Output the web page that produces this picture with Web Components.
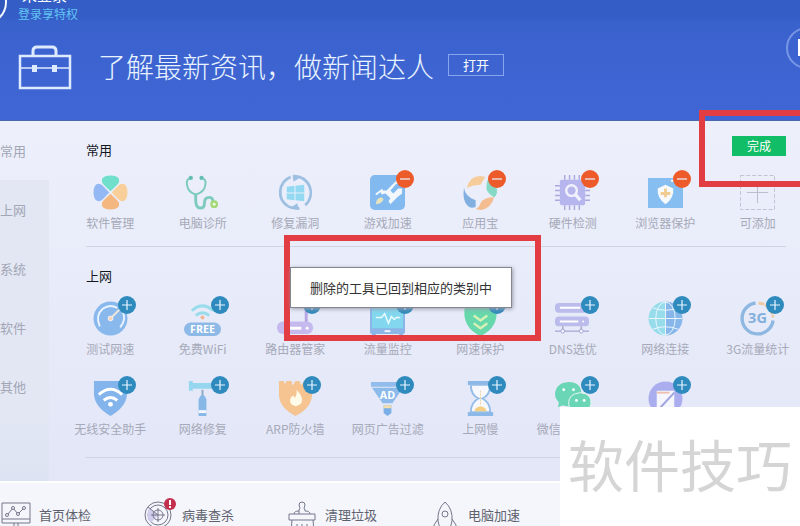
<!DOCTYPE html>
<html lang="zh-CN">
<head>
<meta charset="utf-8">
<meta name="viewport" content="width=device-width, initial-scale=1">
<title>工具箱</title>
<style>
  body {
    margin: 0;
    font-family: "Noto Sans CJK SC", sans-serif;
    font-size: 12px;
    overflow: hidden;
  }
</style>
</head>
<body>
<toolbox-app>
  <news-banner slot="banner">了解最新资讯，做新闻达人</news-banner>
  <side-nav slot="nav"></side-nav>

  <tool-section heading="常用" editing>
    <tool-tile icon="clover">软件管理</tool-tile>
    <tool-tile icon="clinic">电脑诊所</tool-tile>
    <tool-tile icon="patch">修复漏洞</tool-tile>
    <tool-tile icon="game" action="remove">游戏加速</tool-tile>
    <tool-tile icon="store" action="remove">应用宝</tool-tile>
    <tool-tile icon="chip" action="remove">硬件检测</tool-tile>
    <tool-tile icon="browser" action="remove">浏览器保护</tool-tile>
    <tool-tile icon="empty">可添加</tool-tile>
  </tool-section>

  <tool-section heading="上网" class="last">
    <tool-tile icon="gauge" action="add">测试网速</tool-tile>
    <tool-tile icon="wifi" action="add">免费WiFi</tool-tile>
    <tool-tile icon="router" action="add">路由器管家</tool-tile>
    <tool-tile icon="monitor" action="add">流量监控</tool-tile>
    <tool-tile icon="shield" action="add">网速保护</tool-tile>
    <tool-tile icon="dns" action="add">DNS选优</tool-tile>
    <tool-tile icon="globe" action="add">网络连接</tool-tile>
    <tool-tile icon="mobile" action="add">3G流量统计</tool-tile>
    <tool-tile icon="wifishield" action="add">无线安全助手</tool-tile>
    <tool-tile icon="hammer" action="add">网络修复</tool-tile>
    <tool-tile icon="fire" action="add">ARP防火墙</tool-tile>
    <tool-tile icon="funnel" action="add">网页广告过滤</tool-tile>
    <tool-tile icon="hourglass" action="add">上网慢</tool-tile>
    <tool-tile icon="wechat" action="add">微信聊天备份</tool-tile>
    <tool-tile icon="window" action="add"></tool-tile>
  </tool-section>

  <footer-item slot="footer" icon="check">首页体检</footer-item>
  <footer-item slot="footer" icon="virus">病毒查杀</footer-item>
  <footer-item slot="footer" icon="clean">清理垃圾</footer-item>
  <footer-item slot="footer" icon="rocket">电脑加速</footer-item>
</toolbox-app>

<mark-frame class="done"></mark-frame>
<mark-frame class="tip"></mark-frame>
<tip-box>删除的工具已回到相应的类别中</tip-box>
<corner-mark>软件技巧</corner-mark>

<script>
// Tool icons, drawn in a 36 x 36 box
const toolIcons = {
  clover: `
    <path d="M18 17 11 11Q5 1 18 .5 31 1 25 11Z" fill="#70dfcb"/>
    <path d="M17 18 11 11Q1 5 .5 18 1 31 11 25Z" fill="#94b8f4"/>
    <path d="M19 18 25 11Q35 5 35.500 18 35 31 25 25Z" fill="#f8cf98"/>
    <path d="M18 19 11 25Q5 35 18 35.500 31 35 25 25Z" fill="#f3b77f"/>
    <path d="m8 8 20 20M28 8 8 28" stroke="#ebeefa" stroke-width="1.500"/>`,
  clinic: `
    <g fill="none" stroke="#7ccbbd" stroke-width="2">
      <path d="M6 3Q1 4 2 10 3 18 11 20 20 18 21 10 22 4 17 3"/>
      <path d="M11 20v6q0 8 5 8 4 0 4-5 0-6 5-6 4 0 4 6" stroke-width="3"/>
    </g>
    <circle cx="6" cy="3" r="2.200" fill="#64bfb2"/><circle cx="17" cy="3" r="2.200" fill="#64bfb2"/>
    <circle cx="30" cy="30" r="4" fill="#a3d979"/><circle cx="30" cy="30" r="1.500" fill="#effbdc"/>`,
  patch: `
    <g fill="none" stroke="#9dbfe2" stroke-width="2.800">
      <path d="M13 2A17 17 0 0 0 10 32"/><path d="M16 1.200A17 17 0 0 1 28 31"/><path d="M10 32A17 17 0 0 0 22 34"/>
    </g>
    <path d="m15 0 7 3-6 4zM21 36l-7-3 6-4z" fill="#9dbfe2"/>
    <path d="m9 12 8-1v7H9zM18 11l9-1v8h-9zM9 19h8v7l-8-1zM18 19h9v8l-9-1z" fill="#94d9f2"/>`,
  game: `
    <rect width="36" height="36" rx="5" fill="#82b9ef"/>
    <path d="M10 16h7L28 5h6l-3 4h-4l-6 7 3 3 5-5h4v5l-5 4-7 7-2-3 2-3-5-5-4 1z" fill="#f2f7fd"/>
    <path d="M6 30q0-6 6-7l2 2q-2 5-8 5z" fill="#e6e3bd"/><path d="m6 20 7-5" stroke="#f2f7fd" stroke-width="2"/>`,
  store: `
    <path d="M4 13Q7 1 18 1l5 1-5 8Q12 10 4 13z" fill="#f6cd9a"/>
    <path d="M26 3q10 6 9 15-1 4-3 5-7-4-8-9 0-6 2-11z" fill="#86d9c5"/>
    <path d="M1 13q1 9 12 13v7q-5 2-8-1Q-1 26 1 13z" fill="#80afe0"/>
    <path d="M13 35q4-2 5-6 3-6 14-6-3 12-14 13z" fill="#f3bd90"/>`,
  chip: `
    <rect x="5" y="5" width="26" height="26" rx="2" fill="#b7b5ee"/>
    <path d="M10 0v5M15 0v5M20 0v5M25 0v5M10 31v5M15 31v5M20 31v5M25 31v5M0 11h5M0 16h5M0 21h5M0 26h5M31 11h5M31 16h5M31 21h5M31 26h5" stroke="#aaa8de" stroke-width="1.500"/>
    <circle cx="17" cy="16" r="5.500" fill="none" stroke="#f1f1fd" stroke-width="2.500"/>
    <path d="m21 20 5 6" stroke="#f1f1fd" stroke-width="3.500"/>`,
  browser: `
    <path d="M0 3h36v31H0z" fill="#87bef1"/><circle cx="25" cy="6" r="1.500" fill="#eef6ff"/><circle cx="31" cy="6" r="1.500" fill="#eef6ff"/>
    <path d="m18 10 8 4q1 10-8 16Q9 24 10 14z" fill="#f6fafd"/>
    <path d="M18 14v9M13 19h10" stroke="#f1cd94" stroke-width="3"/>`,
  empty: `
    <path d="M.5.5h35v35H.5z" fill="none" stroke="#bfc2d3" stroke-dasharray="4 2"/>
    <path d="M18 7v22M7 18h22" stroke="#b9bccd"/>`,
  gauge: `
    <circle cx="18" cy="18" r="17.500" fill="#89b8ec"/>
    <path d="M7 26Q2 15 10 8q7-5 15-1" fill="none" stroke="#eaf4fe" stroke-width="2"/>
    <path d="M31 12q3 8-3 15" fill="none" stroke="#eaf4fe" stroke-width="2"/>
    <path d="m18 18 9-9" stroke="#eee6da" stroke-width="2"/><circle cx="18" cy="18" r="2.500" fill="#f5d7b9" stroke="#eef2fa"/>`,
  wifi: `
    <path d="M7 10q11-10 22 0M11 15q7-6 14 0" fill="none" stroke="#9bdcec" stroke-width="3"/><circle cx="18" cy="17" r="2" fill="#efb794"/>
    <rect x="-1" y="22" width="38" height="14" rx="7" fill="#8db9e7"/>
    <text x="18" y="33" text-anchor="middle" font-family="Open Sans" font-size="11" font-weight="700" fill="#fff">FREE</text>`,
  router: `
    <path d="M29 3v20" stroke="#b7a4e2" stroke-width="3"/>
    <rect x="-1" y="21" width="37" height="13" rx="6" fill="#c5b9ee"/><path d="M11 28h13" stroke="#fff" stroke-width="3"/><circle cx="30" cy="28" r="1.500" fill="#fff"/>`,
  monitor: `
    <rect width="36" height="34" rx="2" fill="#8bb4e7"/><path d="M2 2h32v26H2z" fill="#82d7ee"/>
    <path d="M6 17h6l3-4 4 10 3-7 3 3 2-2h4" fill="none" stroke="#eafcff" stroke-width="1.500"/><path d="M15 31h6" stroke="#f2f6ff" stroke-width="2"/><path d="M2 34h4v2H2zM30 34h4v2h-4z" fill="#8bb4e7"/>`,
  shield: `
    <path d="m18 0 16 5q4 22-16 31Q-2 27 2 5z" fill="#67d7ac"/>
    <path d="m11 15 7 5 7-5M11 23l7 5 7-5" fill="none" stroke="#d7f1b5" stroke-width="2.500"/>`,
  dns: `
    <rect y="2" width="35" height="10" rx="4" fill="#bbbcec"/><rect y="16" width="35" height="10" rx="4" fill="#bbbcec"/>
    <path d="M5 7h21M5 21h19" stroke="#fff" stroke-width="2"/><circle cx="29" cy="21" r="1" fill="#fff"/>
    <path d="M0 31h35M8 26v5M27 26v5" stroke="#a4a5d3" stroke-width="1.500"/><circle cx="8" cy="31" r="2" fill="#f3f3ff" stroke="#a4a5d3"/><circle cx="27" cy="31" r="2" fill="#f3f3ff" stroke="#a4a5d3"/>`,
  globe: `
    <path d="M18 .5a17.500 17.500 0 0 0 0 35z" fill="#97dceb"/><path d="M18 .5a17.500 17.500 0 0 1 0 35z" fill="#86b6ea"/>
    <g fill="none" stroke="#e9f6fd"><ellipse cx="18" cy="18" rx="10" ry="17"/><path d="M1 18h34M5 7q13 5 26 0M5 29q13-5 26 0M18 1v34"/></g>`,
  mobile: `
    <path d="M16 2A16 16 0 1 0 34 20" fill="none" stroke="#8eb8e2" stroke-width="3.500"/>
    <path d="M19 2q13 1 15 15" fill="none" stroke="#f0c9a2" stroke-width="3" stroke-dasharray="6 1"/>
    <text x="18" y="23" text-anchor="middle" font-family="Open Sans" font-size="15" font-weight="700" fill="#83b0dc">3G</text>`,
  wifishield: `
    <path d="M1 0h34v14q-1 13-17 22Q2 27 1 14z" fill="#83b4ec"/>
    <path d="M6 14q12-11 24 0M11 20q7-6 14 0" fill="none" stroke="#fff" stroke-width="3"/><circle cx="18" cy="24" r="2.500" fill="#fff"/>`,
  hammer: `
    <path d="M4 0h4v2h14v6H8v2H4zM22 2h10v6H22z" fill="#96d6ee"/><path d="M18 9v7" stroke="#8ba9c3" stroke-width="2"/>
    <path d="M16 15h4l2 4v17h-8V19z" fill="#86b7e7"/><path d="M14 30h8v3h-8z" fill="#f3f8ff"/>`,
  fire: `
    <path d="M1 0h5l1 3 2-3h5l1 5 3-5h4l2 4 3-4h8v15q-1 13-17 21Q2 28 1 15z" fill="#f6c491"/>
    <path d="M19 9q8 8 5 14-6 6-11 0-2-6 3-8 1 1 1 3 3-4 2-9z" fill="#fffbe9"/>`,
  funnel: `
    <path d="M1 1h34v5H1z" fill="#91bceb"/><path d="M2 7h32L23 23H13z" fill="#8cbaeb"/><path d="M14 25h8v8l-4 3-4-3z" fill="#79afe6"/><path d="M14 25h8v3h-8z" fill="#f3dfab"/>
    <text x="18" y="19" text-anchor="middle" font-family="Open Sans" font-size="11" font-weight="700" fill="#fff">AD</text>`,
  hourglass: `
    <path d="M5 0h26v4H5zM5 32h26v4H5z" fill="#8db9e8"/>
    <path d="M8 4h20q0 10-8 14 8 4 8 14H8q0-10 8-14Q8 14 8 4z" fill="#f6f8fd" stroke="#93bde8" stroke-width="2"/>
    <path d="M12 31q0-4 6-5 6 1 6 5z" fill="#f4cf82"/><path d="M18 10v14" stroke="#edd296" stroke-dasharray="2 1"/>`,
  wechat: `
    <path d="M14 1q13 0 13 12 0 13-13 13-4 0-6-1l-5 2 1-5Q0 18 0 13 1 2 14 1z" fill="#6bd6b6"/>
    <path d="M26 12q12 1 11 11-1 9-11 10-12-1-12-10 0-10 12-11z" fill="#6bd6b6" stroke="#e6f7f5"/>
    <g fill="#f2fffc"><circle cx="9" cy="9" r="1.500"/><circle cx="19" cy="9" r="1.500"/><circle cx="22" cy="20" r="1.500"/><circle cx="30" cy="20" r="1.500"/></g>`,
  window: `
    <circle cx="18" cy="18" r="17.500" fill="#aaaeef"/><path d="M9 10h18v18H9z" fill="#f5f6fe"/><path d="M9 12h13" stroke="#efc0b0" stroke-width="2"/><path d="M13 27 27 12" stroke="#9ea4dd" stroke-width="2"/>`
}

// Footer icons, line drawings in a 32 x 30 box
const footerIcons = {
  check: '<path d="M2 2h28v20H2zM2 18h28M14 22v4M18 22v4M10 26h12M8 13l5-6 5 6 5-5"/><g fill="#f4f6fc"><circle cx="7" cy="14" r="1.500"/><circle cx="13" cy="7" r="1.500"/><circle cx="18" cy="13" r="1.500"/><circle cx="24" cy="7" r="1.500"/></g>',
  virus: '<circle cx="15" cy="14" r="13"/><circle cx="15" cy="14" r="10"/><path d="M15 14 6 7q-4 9 2 15z" fill="#d1cdec" stroke="none"/><circle cx="15" cy="14" r="5"/><path d="M15 7v14M8 14h14M15 14 5 6"/><circle cx="27" cy="3" r="6" fill="#c3304d" stroke="none"/><path d="M27-1v5M27 5v2" stroke="#fff" stroke-width="2"/>',
  clean: '<path d="M13 13V9l1-2-1-3q0-3 3-3t3 3l-1 3 1 2v1q5 0 5 3M13 10q-5 0-5 3M3 13h26v6H3zM6 19l-1 12M27 19l1 12M11 23v8M16 23v8M21 23v8"/>',
  rocket: '<path d="M16 1Q8 8 9 20l2 8h10l2-8Q24 8 16 1zM9 18l-4 6v7l6-4M23 18l4 6v7l-6-4"/><circle cx="16" cy="13" r="3"/>'
}

/**
 * Attach an open shadow root with the given markup.
 *
 * @param {HTMLElement} host - The host element.
 * @param {string} html - The markup and styles.
 * @returns {ShadowRoot} - The shadow root.
 */
function shadow (host, html) {
  const template = document.createElement('template')
  template.innerHTML = html
  const root = host.attachShadow({ mode: 'open' })
  root.appendChild(template.content.cloneNode(true))
  return root
}

customElements.define('toolbox-app',
  /**
   * The window: banner, side navigation, tools and footer.
   */
  class extends HTMLElement {
    constructor () {
      super()
      shadow(this, `
        <style>
          :host {
            display: flex;
            flex-direction: column;
            min-height: 100vh;
            background: #f4f6fc;
          }
          .middle {
            display: flex;
            background: linear-gradient(#edf0fb, #e2e6f7);
          }
          main {
            flex: 1;
            min-width: 0;
            padding: 0 14px 23px 37px;
          }
          footer {
            display: flex;
            padding-top: 18px;
            border-top: 2px solid #fff;
          }
        </style>
        <slot name="banner"></slot>
        <div class="middle">
          <slot name="nav"></slot>
          <main><slot></slot></main>
        </div>
        <footer><slot name="footer"></slot></footer>
      `)
    }
  }
)

customElements.define('news-banner',
  /**
   * The blue banner with the account and the news line.
   */
  class extends HTMLElement {
    constructor () {
      super()
      shadow(this, `
        <style>
          :host {
            display: block;
            position: relative;
            height: 120px;
            overflow: hidden;
            background: linear-gradient(#345dc6 0 18px, #3a62cd 22px, #4066d5);
            border-bottom: 1px solid #4b68ac;
            color: #fff;
          }
          .account {
            display: flex;
            height: 23px;
          }
          .account svg { width: 18px; height: 24px; }
          .names {
            display: flex;
            flex-direction: column;
            justify-content: flex-end;
          }
          .name { font-size: 15px; line-height: 20px; padding-left: 4px; }
          a { color: #63c5f4; font-size: 12px; line-height: 18px; text-decoration: none; }
          .news {
            display: flex;
            align-items: flex-start;
            padding: 22px 0 0 18px;
          }
          .case { width: 54px; height: 46px; margin-right: 26px; }
          h1 {
            margin: 0 14px 0 0;
            font-size: 28px;
            line-height: 42px;
            font-weight: 300;
            color: #e8f3ff;
            white-space: nowrap;
          }
          button {
            width: 56px;
            height: 22px;
            margin-top: 9px;
            padding: 0;
            border: 1px solid #86a5ee;
            background: none;
            color: #fff;
            font: 13px/20px "Noto Sans CJK SC", sans-serif;
          }
          .play { position: absolute; right: 0; top: 27px; width: 14px; height: 42px; }
        </style>
        <div class="account">
          <svg viewBox="0 0 18 24"><circle cx="-16" cy="2" r="22" fill="#3057bb" stroke="#f3f8ff" stroke-width="2"/></svg>
          <div class="names">
            <span class="name">未登录</span>
            <a href="#">登录享特权</a>
          </div>
        </div>
        <div class="news">
          <svg class="case" viewBox="0 0 54 46" fill="none" stroke="#deebff">
            <path d="M15 10V6q0-4 4-4h15q4 0 4 4v4" stroke-width="3"/>
            <path d="M2 11h50v32H2z" stroke-width="2.500"/>
            <path d="M3 23h48" stroke-width="1.500"/>
            <path d="M14 20h5v7h-5zM34 20h5v7h-5z" fill="#deebff" stroke="none"/>
          </svg>
          <h1><slot></slot></h1>
          <button type="button">打开</button>
        </div>
        <svg class="play" viewBox="0 0 14 42"><circle cx="21" cy="21" r="20" fill="none" stroke="#7896e4" stroke-width="2"/><path d="M12 12h2v17h-2z" fill="#fff"/></svg>
      `)
    }
  }
)

customElements.define('side-nav',
  /**
   * The category navigation.
   */
  class extends HTMLElement {
    constructor () {
      super()
      const items = ['常用', '上网', '系统', '软件', '其他']
      shadow(this, `
        <style>
          :host {
            display: flex;
            flex-direction: column;
            width: 49px;
          }
          a {
            height: 59px;
            line-height: 60px;
            font-size: 13px;
            color: #a2a6b5;
            text-decoration: none;
            background: #e3e7f4;
          }
          a.current { background: none; }
          .rest { flex: 1; background: linear-gradient(#e3e7f4, #dce3f2); }
        </style>
        ${items.map((item, i) => `<a href="#" class="${i ? '' : 'current'}">${item}</a>`).join('')}
        <div class="rest"></div>
      `)
    }
  }
)

customElements.define('tool-section',
  /**
   * A titled grid of tools.
   */
  class extends HTMLElement {
    constructor () {
      super()
      shadow(this, `
        <style>
          :host {
            display: block;
            padding: 15px 0;
            border-bottom: 1px solid #cfd3e2;
          }
          :host(.last) { padding-bottom: 20px; }
          .head {
            display: flex;
            justify-content: space-between;
            height: 24px;
          }
          h2 {
            align-self: flex-end;
            margin: 0;
            font-size: 13px;
            line-height: 20px;
            font-weight: 400;
            color: #15171f;
          }
          button {
            width: 54px;
            height: 20px;
            padding: 0;
            border: 0;
            background: #12bd67;
            color: #fff;
            font: 12px/20px "Noto Sans CJK SC", sans-serif;
          }
          .grid {
            display: grid;
            grid-template-columns: repeat(8, 1fr);
            row-gap: 24px;
            margin: 15px -18px 0 -22px;
          }
        </style>
        <div class="head">
          <h2>${this.getAttribute('heading')}</h2>
          ${this.hasAttribute('editing') ? '<button type="button">完成</button>' : ''}
        </div>
        <div class="grid"><slot></slot></div>
      `)
    }
  }
)

customElements.define('tool-tile',
  /**
   * One tool, with an optional add or remove badge.
   */
  class extends HTMLElement {
    constructor () {
      super()
      const action = this.getAttribute('action')
      const line = action === 'add' ? 'M9 4v10M4 9h10' : 'M4 9h10'
      shadow(this, `
        <style>
          :host {
            display: flex;
            justify-content: center;
            min-width: 0;
          }
          .box { position: relative; }
          button {
            padding: 0;
            border: 0;
            background: none;
            font: inherit;
          }
          .tool {
            display: flex;
            flex-direction: column;
            align-items: center;
            gap: 5px;
            color: #a6a9b8;
            line-height: 16px;
            white-space: nowrap;
          }
          .tool svg { width: 35px; height: 35px; overflow: visible; }
          .tool span { height: 16px; }
          .badge {
            position: absolute;
            left: calc(50% + 8px);
            top: -5px;
            width: 18px;
            height: 18px;
            border-radius: 9px;
            background: #2f8abd;
          }
          .badge.remove { background: #ee5b2b; }
          .badge svg { display: block; }
        </style>
        <div class="box">
          <button type="button" class="tool">
            <svg viewBox="0 0 36 36">${toolIcons[this.getAttribute('icon')]}</svg>
            <span><slot></slot></span>
          </button>
          ${action ? `<button type="button" class="badge ${action}"><svg width="18" height="18"><path d="${line}" stroke="#eaf6ff" stroke-width="1.200"/></svg></button>` : ''}
        </div>
      `)
    }
  }
)

customElements.define('footer-item',
  /**
   * A link in the footer.
   */
  class extends HTMLElement {
    constructor () {
      super()
      shadow(this, `
        <style>
          :host { display: block; width: 143px; }
          a {
            display: flex;
            gap: 7px;
            color: #5f626e;
            font-size: 13px;
            line-height: 28px;
            text-decoration: none;
          }
          svg { width: 32px; height: 30px; overflow: visible; }
        </style>
        <a href="#">
          <svg viewBox="0 0 32 30" fill="none" stroke="#74778a">${footerIcons[this.getAttribute('icon')]}</svg>
          <slot></slot>
        </a>
      `)
    }
  }
)

customElements.define('mark-frame',
  /**
   * A red frame laid over the window.
   */
  class extends HTMLElement {
    constructor () {
      super()
      shadow(this, `
        <style>
          :host {
            position: absolute;
            box-sizing: border-box;
            border: 6px solid #e13d43;
            pointer-events: none;
          }
          :host(.done) { right: -10px; top: 110px; width: 111px; height: 77px; }
          :host(.tip) { left: 284px; top: 235px; width: 257px; height: 106px; }
        </style>
      `)
    }
  }
)

customElements.define('tip-box',
  /**
   * A message floating over the tools.
   */
  class extends HTMLElement {
    constructor () {
      super()
      shadow(this, `
        <style>
          :host {
            position: absolute;
            left: 290px;
            top: 267px;
            box-sizing: border-box;
            width: 222px;
            border: 1px solid #858790;
            background: #fff;
            box-shadow: 1px 1px 4px #9a9cab;
            color: #333;
            font-size: 13px;
            line-height: 39px;
            text-align: center;
            white-space: nowrap;
          }
        </style>
        <slot></slot>
      `)
    }
  }
)

customElements.define('corner-mark',
  /**
   * The plate in the bottom right corner.
   */
  class extends HTMLElement {
    constructor () {
      super()
      shadow(this, `
        <style>
          :host {
            position: absolute;
            right: 0;
            bottom: 0;
            padding: 0 8px 8px;
            background: #fff;
            color: #d5d5d5;
            font-size: 56px;
            line-height: 111px;
          }
        </style>
        <slot></slot>
      `)
    }
  }
)
</script>
</body>
</html>
